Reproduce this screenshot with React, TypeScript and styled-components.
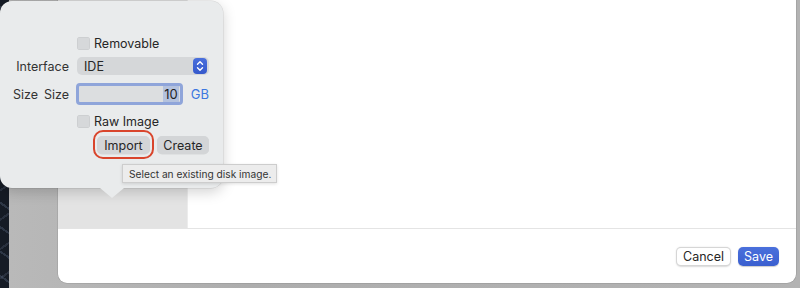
import React from "react";
import styled, { createGlobalStyle } from "styled-components";

const Global = createGlobalStyle`
  html, body { margin: 0; padding: 0; background: #b2b2b2; }
  body { font-family: Inter, "Liberation Sans", "Noto Sans", sans-serif; -webkit-font-smoothing: antialiased; }
  * { box-sizing: border-box; }
`;

const Page = styled.div`
  position: relative;
  width: 800px;
  height: 288px;
  overflow: hidden;
  display: flex;
  background: #b1b1b1;
`;

const Desktop = styled.div`
  width: 9px;
  flex: none;
  background:
    repeating-linear-gradient(35deg, transparent 0 9px, rgba(90,105,130,0.35) 9px 11px, transparent 11px 20px),
    repeating-linear-gradient(-35deg, transparent 0 12px, rgba(70,80,100,0.4) 12px 14px, transparent 14px 24px),
    #151b25;
`;

const ParentWindow = styled.div`
  flex: 1;
  display: flex;
  padding: 0 4px 5px 49px;
  background: linear-gradient(90deg, #b9b9b9, #adadad 30%, #b3b3b3);
`;

const Sheet = styled.div`
  flex: 1;
  display: flex;
  flex-direction: column;
  background: #fff;
  border-radius: 0 0 9px 9px;
  overflow: hidden;
  box-shadow: 0 0 0 0.5px rgba(0, 0, 0, 0.15);
`;

const SheetBody = styled.div`
  flex: 1;
  display: flex;
`;

const Sidebar = styled.div`
  width: 130px;
  background: #e3e3e3;
  border-right: 1px solid #ececec;
`;

const Content = styled.div`
  flex: 1;
  background: #fff;
`;

const Footer = styled.div`
  height: 55px;
  border-top: 1px solid #e4e4e4;
  display: flex;
  justify-content: flex-end;
  align-items: center;
  gap: 7px;
  padding-right: 17px;
`;

const FooterButton = styled.button<{ $primary?: boolean; $w: number }>`
  width: ${(p) => p.$w}px;
  height: 19px;
  padding: 0;
  border-radius: 5px;
  font-family: inherit;
  font-size: 12.5px;
  line-height: 17px;
  border: ${(p) => (p.$primary ? "none" : "0.5px solid rgba(0,0,0,0.16)")};
  background: ${(p) => (p.$primary ? "linear-gradient(#4a70dc, #3a5fcf)" : "#fff")};
  color: ${(p) => (p.$primary ? "#fff" : "#262626")};
  box-shadow: ${(p) => (p.$primary ? "0 0.5px 1px rgba(0,0,0,0.2)" : "0 0.5px 1.5px rgba(0,0,0,0.15)")};
`;

const Popover = styled.div`
  position: absolute;
  left: 0;
  top: 1px;
  width: 223px;
  height: 187px;
  background: #e9ebec;
  border-radius: 12px;
  box-shadow: 0 4px 14px rgba(0, 0, 0, 0.18), 0 0 0 0.5px rgba(0, 0, 0, 0.12);
  padding: 34px 14px 0 12px;
  &::after {
    content: "";
    position: absolute;
    left: 100px;
    bottom: -10px;
    width: 24px;
    height: 10px;
    background: #e9ebec;
    clip-path: polygon(0 0, 100% 0, 50% 100%);
  }
`;

const Form = styled.div`
  display: grid;
  grid-template-columns: 57px 132px;
  grid-template-rows: 16px 30px 26px 28px 20px;
  column-gap: 8px;
  align-items: center;
  font-size: 12.5px;
  color: #262626;
`;

const Label = styled.div`
  text-align: right;
  display: flex;
  justify-content: flex-end;
  gap: 6px;
  color: #333;
`;

const CheckRow = styled.label`
  grid-column: 2;
  display: flex;
  align-items: center;
  gap: 4px;
`;

const Box = styled.span`
  width: 13px;
  height: 13px;
  border-radius: 3px;
  background: #d6d8da;
  box-shadow: inset 0 0 0 0.5px rgba(0, 0, 0, 0.08);
`;

const Popup = styled.div`
  height: 18px;
  border-radius: 5px;
  background: #d5d7d9;
  display: flex;
  align-items: center;
  justify-content: space-between;
  padding: 0 2px 0 7px;
`;

const Stepper = styled.span`
  width: 14px;
  height: 16px;
  border-radius: 4px;
  background: linear-gradient(#4a6fdc, #3559cc);
  display: flex;
  align-items: center;
  justify-content: center;
`;

const SizeRow = styled.div`
  display: flex;
  align-items: center;
  gap: 8px;
  margin-left: -1px;
`;

const Field = styled.div`
  width: 110px;
  height: 22px;
  border: 3px solid #8fa5da;
  border-radius: 4px;
  background: #dcdee0;
  display: flex;
  align-items: center;
  justify-content: flex-end;
  padding-right: 1px;
`;

const Selected = styled.span`
  background: #b4c2de;
  padding: 0 1px;
  line-height: 16px;
  font-size: 13px;
  color: #1f1f1f;
`;

const Unit = styled.span`
  color: #3d78e0;
  font-size: 13px;
`;

const ButtonRow = styled.div`
  grid-column: 2;
  display: flex;
  justify-content: flex-end;
  gap: 7px;
`;

const SmallButton = styled.button<{ $ringed?: boolean }>`
  position: relative;
  height: 18px;
  width: ${(p) => (p.$ringed ? "53px" : "52px")};
  border: none;
  border-radius: 5px;
  background: #d3d5d7;
  font-family: inherit;
  font-size: 12.5px;
  color: #262626;
  padding: 0;
  box-shadow: 0 0.5px 0.5px rgba(0, 0, 0, 0.08);
  &::after {
    content: "";
    display: ${(p) => (p.$ringed ? "block" : "none")};
    position: absolute;
    left: -4px;
    right: -4px;
    top: -6px;
    bottom: -5px;
    border: 2px solid #d9452c;
    border-radius: 10px;
  }
`;

const Tooltip = styled.div`
  position: absolute;
  left: 122px;
  top: 163px;
  width: 155px;
  height: 19px;
  background: #ececec;
  border: 0.5px solid #cdcdcd;
  box-shadow: 0 1px 3px rgba(0, 0, 0, 0.12);
  font-size: 10.2px;
  color: #333;
  display: flex;
  align-items: center;
  padding-left: 6px;
  white-space: nowrap;
`;

export default function App() {
  return (
    <>
      <Global />
      <Page>
        <Desktop />
        <ParentWindow>
          <Sheet>
            <SheetBody>
              <Sidebar />
              <Content />
            </SheetBody>
            <Footer>
              <FooterButton $w={55}>Cancel</FooterButton>
              <FooterButton $w={41} $primary>Save</FooterButton>
            </Footer>
          </Sheet>
        </ParentWindow>
        <Popover>
          <Form>
            <CheckRow>
              <Box />
              Removable
            </CheckRow>
            <Label>Interface</Label>
            <Popup>
              <span>IDE</span>
              <Stepper>
                <svg width="8" height="12" viewBox="0 0 8 12" fill="none" stroke="#fff" strokeWidth="1.4" strokeLinecap="round" strokeLinejoin="round">
                  <path d="M1.5 4.2 L4 1.7 L6.5 4.2" />
                  <path d="M1.5 7.8 L4 10.3 L6.5 7.8" />
                </svg>
              </Stepper>
            </Popup>
            <Label>
              <span>Size</span>
              <span>Size</span>
            </Label>
            <SizeRow>
              <Field>
                <Selected>10</Selected>
              </Field>
              <Unit>GB</Unit>
            </SizeRow>
            <CheckRow>
              <Box />
              Raw Image
            </CheckRow>
            <ButtonRow>
              <SmallButton $ringed>Import</SmallButton>
              <SmallButton>Create</SmallButton>
            </ButtonRow>
          </Form>
          <Tooltip>Select an existing disk image.</Tooltip>
        </Popover>
      </Page>
    </>
  );
}
